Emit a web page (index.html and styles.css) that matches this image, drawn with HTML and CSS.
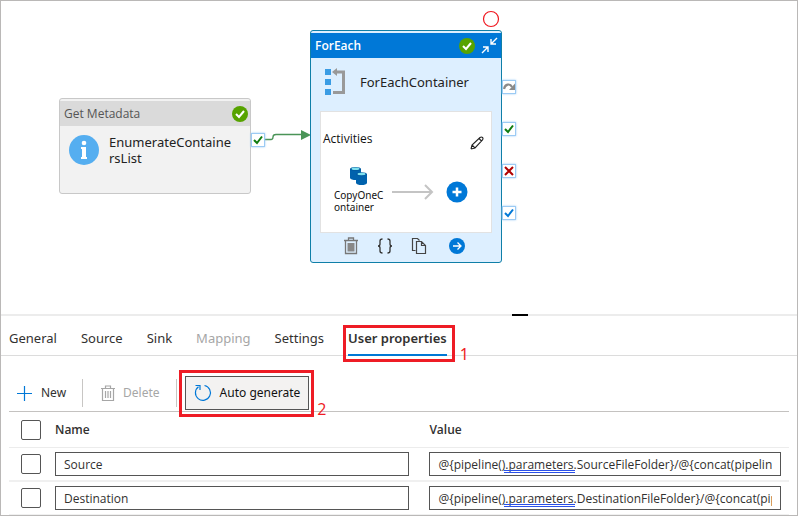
FILE: index.html
```html
<!DOCTYPE html>
<html lang="en">
<head>
    <meta charset="UTF-8">
    <meta name="viewport" content="width=device-width, initial-scale=1.0">
    <title>Pipeline - User properties</title>
    <link rel="stylesheet" href="styles.css">
</head>
<body>
    <main class="designer">
        <section class="canvas">
            <svg class="connector" width="46" height="14" viewBox="0 0 46 14">
                <path d="M0 9.500H6Q8 9.500 8 7T11 4.500H38" fill="none" stroke="#4a9457" stroke-width="1.300"/>
                <path d="M36 0L46 5L36 10Z" fill="#4a9457"/>
            </svg>

            <article class="node metadata-node">
                <header class="node-header">
                    <span>Get Metadata</span>
                    <svg class="status-icon" width="16" height="16" viewBox="0 0 16 16">
                        <circle cx="8" cy="8" r="8" fill="#57a300"/>
                        <path d="M4 8L7 11L12 5" fill="none" stroke="#fff" stroke-width="2"/>
                    </svg>
                </header>
                <div class="node-body">
                    <svg width="30" height="30" viewBox="0 0 30 30">
                        <circle cx="15" cy="15" r="15" fill="#55aef0"/>
                        <circle cx="15" cy="8" r="2.300" fill="#fff"/>
                        <path d="M12 12H17V22H18V24H12V22H13V14H12Z" fill="#fff"/>
                    </svg>
                    <span class="node-name">EnumerateContainersList</span>
                </div>
                <div class="ports">
                    <svg class="port" viewBox="0 0 12 12"><path d="M2 6L5 9L10 2.500" fill="none" stroke="#107c10" stroke-width="2"/></svg>
                </div>
            </article>

            <svg class="breakpoint" width="18" height="18" viewBox="0 0 18 18">
                <circle cx="9" cy="9" r="7.500" fill="#fff" stroke="#f01820" stroke-width="1.200"/>
            </svg>

            <article class="node foreach-node">
                <header class="node-header">
                    <span>ForEach</span>
                    <svg class="status-icon" width="16" height="16" viewBox="0 0 16 16">
                        <circle cx="8" cy="8" r="8" fill="#57a300"/>
                        <path d="M4 8L7 11L12 5" fill="none" stroke="#fff" stroke-width="2"/>
                    </svg>
                    <button class="icon-button" aria-label="Collapse">
                        <svg width="17" height="17" viewBox="0 0 17 17" fill="none" stroke="#fff" stroke-width="1.400">
                            <path d="M16 1L10.500 6.500M10 2V7H15M1 16L6.500 10.500M2 10H7V15"/>
                        </svg>
                    </button>
                </header>
                <div class="node-body">
                    <svg width="22" height="28" viewBox="0 0 22 28">
                        <path d="M1 1H7V7H1ZM1 11H7V17H1ZM1 21H7V27H1Z" fill="#3a9ce4"/>
                        <path d="M12 4H19.500V24.500H9" fill="none" stroke="#999" stroke-width="3"/>
                        <path d="M8 4L13 0V8Z" fill="#999"/>
                    </svg>
                    <span class="node-name">ForEachContainer</span>
                </div>
                <div class="activities">
                    <div class="activities-header">
                        <span>Activities</span>
                        <button class="icon-button" aria-label="Edit activities">
                            <svg width="14" height="14" viewBox="0 0 14 14" fill="none" stroke="#222" stroke-width="1.100">
                                <path d="M1 13L2 9L10 1.500Q11.500 .500 12.500 1.500T12.500 4L5 12L1 13M2 9L5 12M9 2.500L11.500 5"/>
                            </svg>
                        </button>
                    </div>
                    <div class="flow">
                        <div class="activity">
                            <svg width="18" height="18" viewBox="0 0 18 18">
                                <path d="M0 2V11Q1 13 6 13V7H11V2Z" fill="#0062ad"/>
                                <ellipse cx="5.500" cy="2" rx="5.500" ry="2" fill="#005ba1"/>
                                <ellipse cx="5.500" cy="1.800" rx="4" ry="1.200" fill="#7fe0ee"/>
                                <path d="M6 7V16Q7 18 11.500 18T17 16V7Z" fill="#0062ad"/>
                                <ellipse cx="11.500" cy="7.200" rx="5.500" ry="2" fill="#005ba1"/>
                                <ellipse cx="11.500" cy="7" rx="4" ry="1.200" fill="#7fe0ee"/>
                            </svg>
                            <span>CopyOneContainer</span>
                        </div>
                        <svg class="flow-arrow" width="42" height="16" viewBox="0 0 42 16" fill="none" stroke="#c4c4c4" stroke-width="2">
                            <path d="M0 8H40M33 1L40 8L33 15"/>
                        </svg>
                        <button class="icon-button add-button" aria-label="Add activity">
                            <svg width="22" height="22" viewBox="0 0 22 22">
                                <circle cx="11" cy="11" r="10.500" fill="#0078d7"/>
                                <path d="M6.500 11H15.500M11 6.500V15.500" stroke="#fff" stroke-width="2.500"/>
                            </svg>
                        </button>
                    </div>
                </div>
                <footer class="node-actions">
                    <button class="icon-button" aria-label="Delete activity">
                        <svg width="16" height="18" viewBox="0 0 16 18" fill="none" stroke="#777" stroke-width="1.300">
                            <path d="M1 3.500H15M5.500 3V1H10.500V3M2.500 4V16.500H13.500V4"/>
                            <path d="M4.500 6H11.500V14.500H4.500Z" fill="#888" stroke="none"/>
                        </svg>
                    </button>
                    <button class="icon-button" aria-label="View code">
                        <svg width="16" height="18" viewBox="0 0 16 18" fill="none" stroke="#333" stroke-width="1.300">
                            <path d="M5.500 2Q3 2 3 4V7Q3 9 1 9Q3 9 3 11V14Q3 16 5.500 16M10.500 2Q13 2 13 4V7Q13 9 15 9Q13 9 13 11V14Q13 16 10.500 16"/>
                        </svg>
                    </button>
                    <button class="icon-button" aria-label="Copy activity">
                        <svg width="16" height="18" viewBox="0 0 16 18" fill="none" stroke="#444" stroke-width="1.200">
                            <path d="M4.500 13.500H1.500V1.500H6.500L8.500 3.500M5.500 4.500H10.500L14.500 8.500V16.500H5.500ZM10.500 4.500V8.500H14.500"/>
                        </svg>
                    </button>
                    <button class="icon-button open-button" aria-label="Open activity">
                        <svg width="16" height="18" viewBox="0 0 16 18">
                            <circle cx="8" cy="9" r="8" fill="#0078d7"/>
                            <path d="M4 9H12M8.500 5.500L12 9L8.500 12.500" fill="none" stroke="#fff" stroke-width="1.300"/>
                        </svg>
                    </button>
                </footer>
                <div class="ports">
                    <svg class="port" viewBox="0 0 12 12"><path d="M1 8C2 3 7 2 9 6" fill="none" stroke="#8a8a8a" stroke-width="2.200"/><path d="M12 2.500V9H6Z" fill="#8a8a8a"/></svg>
                    <svg class="port" viewBox="0 0 12 12"><path d="M2 6L5 9L10 2.500" fill="none" stroke="#107c10" stroke-width="2"/></svg>
                    <svg class="port" viewBox="0 0 12 12"><path d="M2 2L10 10M10 2L2 10" fill="none" stroke="#b00000" stroke-width="2"/></svg>
                    <svg class="port" viewBox="0 0 12 12"><path d="M2 6L5 9L10 2.500" fill="none" stroke="#0078d7" stroke-width="2"/></svg>
                </div>
            </article>
            <div class="resize-handle"></div>
        </section>

        <nav class="tabs">
            <button class="tab">General</button>
            <button class="tab">Source</button>
            <button class="tab">Sink</button>
            <button class="tab" disabled>Mapping</button>
            <button class="tab">Settings</button>
            <div class="marked marked-tab">
                <button class="tab active">User properties</button>
                <span class="step">1</span>
            </div>
        </nav>

        <section class="properties">
            <div class="toolbar">
                <button class="tool">
                    <svg width="16" height="16" viewBox="0 0 16 16" stroke="#0078d7" stroke-width="1.200"><path d="M0 8.500H15M7.500 1V16"/></svg>
                    New
                </button>
                <span class="separator"></span>
                <button class="tool" disabled>
                    <svg width="14" height="16" viewBox="0 0 14 16" fill="none" stroke="#a6a6a6" stroke-width="1.200">
                        <path d="M0 3.500H14M4.500 3V1H9.500V3M1.500 4V15.500H12.500V4M4.500 6V13M7 6V13M9.500 6V13"/>
                    </svg>
                    Delete
                </button>
                <span class="separator"></span>
                <div class="marked marked-button">
                    <button class="tool generate">
                        <svg width="18" height="18" viewBox="0 0 18 18" fill="none" stroke="#0078d7" stroke-width="1.200">
                            <path d="M10.500 1.500A7.500 7.500 0 1 1 4.500 2.800M1.500 1.500H6V6"/>
                        </svg>
                        Auto generate
                    </button>
                    <span class="step">2</span>
                </div>
            </div>

            <table class="property-table">
                <thead>
                    <tr>
                        <th class="check-col"><input type="checkbox" aria-label="Select all"></th>
                        <th class="name-col">Name</th>
                        <th class="value-col">Value</th>
                    </tr>
                </thead>
                <tbody>
                    <tr>
                        <td><input type="checkbox" aria-label="Select Source"></td>
                        <td class="name-col"><input type="text" aria-label="Name" value="Source"></td>
                        <td class="value-col">
                            <div class="value-field">
                                <input type="text" aria-label="Value" value="@{pipeline().parameters.SourceFileFolder}/@{concat(pipeline().parameters.SourceFileDirectory)}">
                                <span class="grammar-mark"></span>
                            </div>
                        </td>
                    </tr>
                    <tr>
                        <td><input type="checkbox" aria-label="Select Destination"></td>
                        <td class="name-col"><input type="text" aria-label="Name" value="Destination"></td>
                        <td class="value-col">
                            <div class="value-field">
                                <input type="text" aria-label="Value" value="@{pipeline().parameters.DestinationFileFolder}/@{concat(pipeline().parameters.DestinationFileDirectory)}">
                                <span class="grammar-mark"></span>
                            </div>
                        </td>
                    </tr>
                </tbody>
            </table>
        </section>
    </main>
</body>
</html>
```
FILE: styles.css
```css
* {
    box-sizing: border-box;
}
body {
    margin: 0;
    font-family: "Noto Sans", "Open Sans", sans-serif;
    font-size: 13px;
    line-height: 16px;
    color: #323130;
    background-color: white;
}
button,
input {
    font: inherit;
    color: inherit;
}
button {
    padding: 0;
    border: none;
    background: none;
    cursor: pointer;
}
svg {
    display: block;
    flex-shrink: 0;
}
.designer {
    min-height: 100vh;
    border: 1px solid #bab8b7;
}

/* Canvas */
.canvas {
    position: relative;
    height: 315px;
    border-bottom: 2px solid #ececec;
}
.node {
    position: absolute;
    width: 192px;
    border-radius: 3px;
}
.node-header {
    display: flex;
    align-items: center;
    height: 25px;
    padding: 0 3px 0 4px;
    font-family: "Open Sans", sans-serif;
    font-size: 12px;
}
.status-icon {
    margin-left: auto;
}
.node-body {
    display: flex;
    align-items: center;
}
.node-name {
    color: #222;
    overflow-wrap: anywhere;
}
.metadata-node {
    left: 58px;
    top: 97px;
    height: 96px;
    padding-top: 2px;
    border: 1px solid #c8c8c8;
    background-color: #f2f2f2;
}
.metadata-node .node-header {
    padding-right: 2px;
    color: #555;
    background-color: #dadada;
}
.metadata-node .node-body {
    gap: 10px;
    padding: 8px 17px 0 9px;
}
.foreach-node {
    left: 309px;
    top: 29px;
    height: 233px;
    padding-top: 2px;
    border: 1px solid #0f7fa8;
    background-color: #ddefff;
}
.foreach-node .node-header {
    gap: 6px;
    font-weight: 600;
    color: white;
    background-color: #0078d7;
}
.foreach-node .node-body {
    gap: 14px;
    padding: 10px 12px 15px 13px;
}
.activities {
    height: 122px;
    margin: 0 9px;
    border: 1px solid #e2e2e2;
    background-color: white;
}
.activities-header {
    display: flex;
    justify-content: space-between;
    padding: 19px 7px 0 2px;
    font-family: "Open Sans", sans-serif;
    font-size: 12px;
    font-weight: 500;
    color: #111;
}
.activities-header svg {
    margin-top: 5px;
}
.flow {
    display: flex;
    align-items: center;
    padding-left: 13px;
}
.activity {
    display: flex;
    flex-direction: column;
    width: 50px;
    padding-top: 17px;
    font-size: 10px;
    line-height: 12px;
    color: #111;
    overflow-wrap: anywhere;
}
.activity svg {
    margin: 0 0 4px 16px;
}
.flow-arrow {
    margin: 20px 12px 0 8px;
}
.add-button {
    margin-top: 20px;
}
.node-actions {
    display: flex;
    gap: 18px;
    padding: 4px 32px;
}
.open-button {
    margin-left: 4px;
}
.ports {
    position: absolute;
    left: 191px;
    top: 34px;
    display: flex;
    flex-direction: column;
    gap: 28px;
}
.foreach-node .ports {
    top: 49px;
}
.port {
    width: 14px;
    height: 14px;
    border: 1px solid #9ccbf4;
    background-color: white;
    box-shadow: 0 0 2px #9ccbf4;
}
.connector {
    position: absolute;
    left: 264px;
    top: 129px;
}
.breakpoint {
    position: absolute;
    left: 481px;
    top: 9px;
}
.resize-handle {
    position: absolute;
    left: 511px;
    bottom: -2px;
    width: 16px;
    height: 2px;
    background-color: black;
}

/* Tabs */
.tabs {
    display: flex;
    gap: 24px;
    padding: 0 8px;
    border-bottom: 1px solid #dcdcdc;
}
.tab {
    height: 39px;
    padding-top: 5px;
    white-space: nowrap;
}
.tab:disabled,
.tool:disabled {
    color: #a6a6a6;
    cursor: default;
}
.tab.active {
    margin-bottom: -1px;
    height: 40px;
    border-bottom: 2px solid #0078d4;
    font-weight: 600;
}

/* Red callouts */
.marked {
    position: relative;
}
.marked::after {
    content: "";
    position: absolute;
    border: 3px solid #ee1c25;
    pointer-events: none;
}
.marked-tab::after {
    inset: 9px -8px -7px -5px;
}
.marked-button::after {
    inset: -6px -5px -7px -6px;
    z-index: 1;
}
.step {
    position: absolute;
    left: 100%;
    margin-left: 13px;
    top: 30px;
    font-size: 16px;
    color: #ee1c25;
}
.marked-button .step {
    margin-left: 8px;
    top: 25px;
}

/* Property list */
.properties {
    padding: 20px 8px 0;
    font-family: "Open Sans", sans-serif;
}
.toolbar {
    display: flex;
    align-items: center;
    padding: 0 8px;
}
.tool {
    display: flex;
    align-items: center;
    gap: 8px;
    height: 34px;
    font-family: "Noto Sans", sans-serif;
    font-size: 12px;
}
.separator {
    width: 1px;
    height: 28px;
    margin: 0 8px 0 16px;
    background-color: #c8c6c4;
}
.separator + .tool {
    margin-left: 10px;
}
.generate {
    padding: 0 8px;
    border: 1px solid #555;
    color: #111;
    background-color: #f3f2f1;
}
.property-table {
    width: 100%;
    margin-top: 1px;
    table-layout: fixed;
    border-collapse: separate;
    border-spacing: 0;
    border-top: 1px solid #c4c2c0;
}
.property-table th {
    height: 36px;
    padding: 0;
    border-bottom: 1px solid #ececec;
    font-size: 12px;
    font-weight: 600;
    text-align: left;
}
.property-table td {
    height: 34px;
    padding: 0;
    border-bottom: 2px solid #f0f0f0;
}
.property-table tbody tr:last-child td {
    height: 33px;
    border-bottom-width: 1px;
}
.property-table .check-col {
    width: 46px;
}
.property-table .name-col {
    width: 48%;
}
.property-table td.name-col {
    padding-right: 20px;
}
.property-table td.value-col {
    padding-right: 8px;
}
input[type="checkbox"] {
    display: block;
    appearance: none;
    width: 20px;
    height: 20px;
    margin: 0 0 0 12px;
    border: 1px solid #555;
    border-radius: 2px;
    background-color: white;
}
input[type="text"] {
    display: block;
    width: 100%;
    height: 24px;
    padding: 0 8px;
    border: 1px solid #555;
    border-radius: 0;
    font-size: 12px;
    background-color: white;
}
.value-field {
    position: relative;
}
.grammar-mark {
    position: absolute;
    left: 75px;
    top: 18px;
    width: 71px;
    height: 3px;
    border: solid #2b50e8;
    border-width: 1px 0;
}
```
